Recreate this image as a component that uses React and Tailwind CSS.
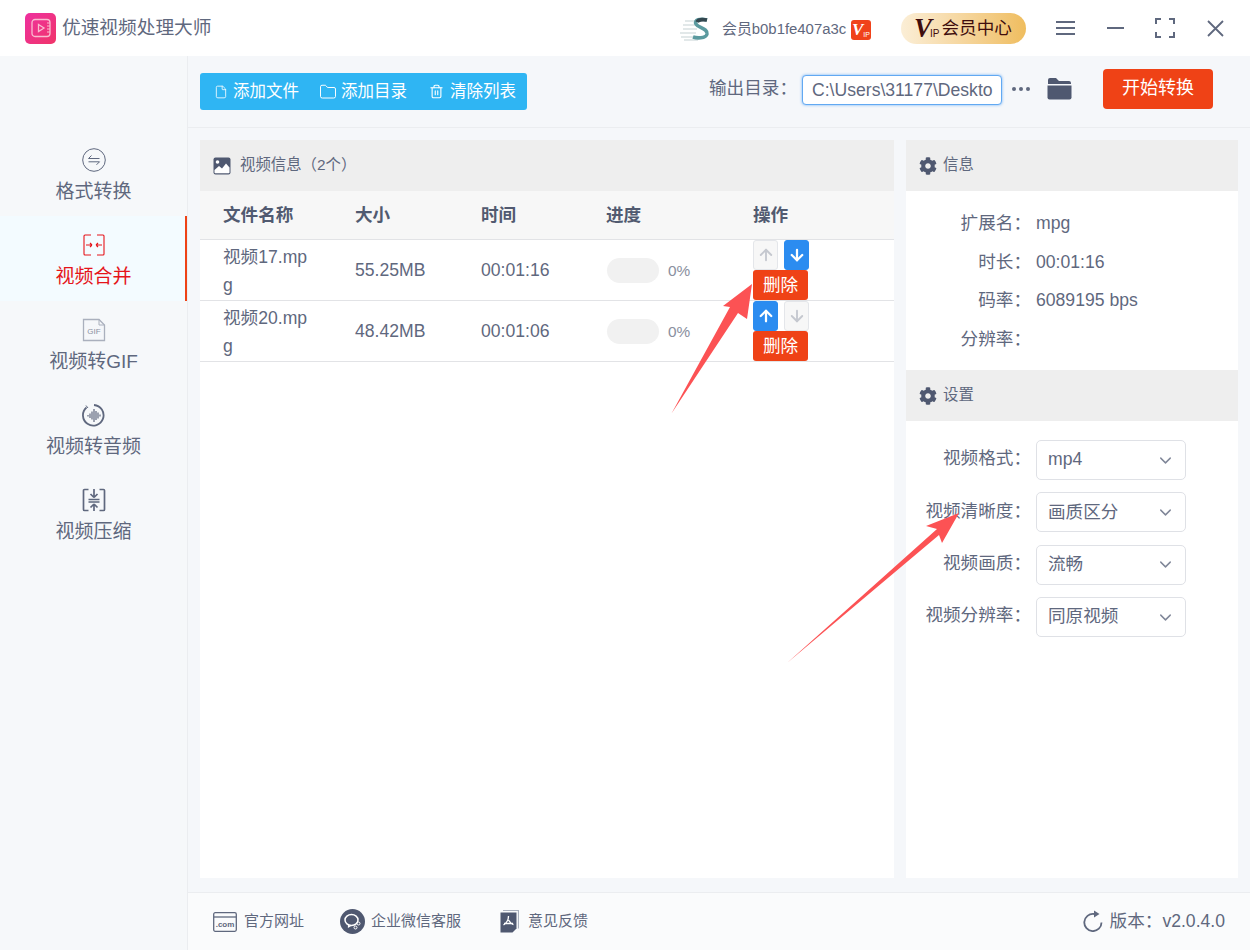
import React from 'react';
import { ArrowUp, ArrowDown, ChevronDown, File, Folder, Trash2 } from 'lucide-react';
import { FaCog } from 'react-icons/fa';

const C = '#5f687e';

function Logo() {
  return (
    <div className="w-[31px] h-[31px] rounded-[5px] bg-gradient-to-br from-[#ee2f9f] to-[#f03468] flex items-center justify-center">
      <svg width="20" height="20" viewBox="0 0 20 20" fill="none" stroke="#f9bcd0" strokeWidth="1.3">
        <rect x="1" y="1.5" width="18" height="17" rx="3" />
        <path d="M7.5 6.5 L13 10 L7.5 13.5 Z" />
        <path d="M16 5h3M16 8h3M16 11h3M16 14h3" strokeWidth="1" />
      </svg>
    </div>
  );
}

function SLogo() {
  return (
    <svg width="32" height="26" viewBox="0 0 32 26" fill="none">
      <path d="M5 5h12M3 9h12M3 13h14M0 17h16M1 21h18M4 24h14" stroke="#c6d2d3" strokeWidth="1.2" />
      <path d="M27 4 C20 2 14 4 16 8 C18 12 28 12 27 18 C26 23 16 22 13 21" stroke="#5b9a9f" strokeWidth="3.6" />
      <path d="M27 4 C22 3 18 4 17 6" stroke="#33474f" strokeWidth="3.6" />
    </svg>
  );
}

function SideIcon({ kind, color }) {
  if (kind === 'swap')
    return (
      <svg width="24" height="24" viewBox="0 0 24 24" fill="none" stroke={color} strokeWidth="1">
        <circle cx="12" cy="12" r="11.3" />
        <path d="M6.5 10.5h11M6.5 10.5l3-3M17.5 13.8h-11M17.5 13.8l-3 3" />
      </svg>
    );
  if (kind === 'merge')
    return (
      <svg width="24" height="24" viewBox="0 0 24 24" fill="none" stroke={color} strokeWidth="1.1">
        <path d="M9 2H3a1 1 0 0 0-1 1v18a1 1 0 0 0 1 1h6M15 2h6a1 1 0 0 1 1 1v18a1 1 0 0 1-1 1h-6" />
        <path d="M4 12h6M10 12l-2-2M10 12l-2 2M20 12h-6M14 12l2-2M14 12l2 2" />
      </svg>
    );
  if (kind === 'gif')
    return (
      <svg width="24" height="24" viewBox="0 0 24 24" fill="none">
        <path d="M1.5 1.5h15.500l5.500 5.500v15.500h-21z" stroke="#aab0bd" strokeWidth="1.300" fill="#f5f7fa" />
        <path d="M17 1.500v5.500h5.500" stroke="#aab0bd" strokeWidth="1" />
        <text x="12" y="16" textAnchor="middle" fontSize="8" fontFamily="Liberation Sans" fill="#8a91a1">GIF</text>
      </svg>
    );
  if (kind === 'audio')
    return (
      <svg width="24" height="24" viewBox="0 0 24 24" fill="none" stroke={color}>
        <path d="M4.500 4.500 A10.300 10.300 0 1 0 12 2" strokeWidth="1.800" />
        <path d="M4 2.500 L6 5" strokeWidth="1" />
        <path d="M6 12v1.500M8 10.500v4.500M10 8.500v8M12 6v13M14 8v9M16 9.500v6M18 11.500v2" strokeWidth="1.200" />
      </svg>
    );
  return (
    <svg width="24" height="24" viewBox="0 0 24 24" fill="none" stroke={color} strokeWidth="1.700">
      <path d="M6.500 1.500H2.500a1 1 0 0 0-1 1v19a1 1 0 0 0 1 1h4M17.500 1.500h4a1 1 0 0 1 1 1v19a1 1 0 0 1-1 1h-4" />
      <path d="M6.500 11.500h11M12 1v8.500M12 9.500l-3.500-3.500M12 9.500l3.500-3.500M6.500 14h11M12 23v-7M12 16l-3.500 3.500M12 16l3.500 3.500" />
    </svg>
  );
}

function SideItem({ kind, label, active }) {
  return (
    <div className={`h-[85px] flex flex-col items-center pt-[17px] pl-[2px] border-r-2 ${active ? 'bg-[#f3fbff] border-[#ee4216] text-[#e5141a]' : 'border-transparent text-[#5f687e]'}`}>
      <div className="h-6 flex items-center">
        <SideIcon kind={kind} color={active ? '#e5141a' : C} />
      </div>
      <div className="mt-[8px] text-[19px] leading-6">{label}</div>
    </div>
  );
}

function ToolBtn({ icon, label, cls }) {
  return (
    <div className={`flex items-center text-white text-[16.5px] ${cls}`}>
      {icon}
      <span>{label}</span>
    </div>
  );
}

function PanelHead({ icon, label }) {
  return (
    <div className="h-[51px] shrink-0 bg-[#eeeeee] flex items-center pl-[13px] text-[15.4px] text-[#5f687e]">
      {icon}
      <span className="ml-[6px] mb-[1px]">{label}</span>
    </div>
  );
}

function ImgIcon() {
  return (
    <svg className="mr-[3px]" width="18" height="18" viewBox="0 0 18 18">
      <rect x="0.500" y="0.500" width="17" height="17" rx="2" fill="#4f5870" />
      <circle cx="4.500" cy="5" r="1.800" fill="#fff" />
      <path d="M1.500 13 L6 9 L9 11.500 L13 6.500 L16.500 10.500 V15.500 a0.800 0.800 0 0 1 -0.800 0.800 H2.300 a0.800 0.800 0 0 1 -0.800 -0.800 Z" fill="#fff" />
    </svg>
  );
}

function MoveBtn({ dir, on }) {
  const I = dir === 'up' ? ArrowUp : ArrowDown;
  return (
    <div className={`w-[25px] h-[30px] rounded-[3px] flex items-center justify-center border ${on ? 'bg-[#2b8cf0] border-[#2b8cf0] text-white' : 'bg-[#f7f7f7] border-[#e4e6ea] text-[#c5c8cf]'}`}>
      <I size={18} strokeWidth={on ? 3 : 2.500} />
    </div>
  );
}

function Row({ name, size, time, first }) {
  return (
    <div className="h-[61px] border-b border-[#e2e3e6] grid grid-cols-[132px_126px_125px_147px_1fr] pl-[23px] items-center text-[17.6px] text-[#5f687e]">
      <div className="w-[90px] break-all leading-[28px] pt-[1px]">{name}</div>
      <div>{size}</div>
      <div>{time}</div>
      <div className="flex items-center mt-[1px]">
        <div className="w-[52px] h-[25px] rounded-full bg-[#f1f1f1] ml-[1px]" />
        <span className="ml-[9px] text-[15.4px] text-[#8a90a0]">0%</span>
      </div>
      <div className="w-[56px]">
        <div className="flex justify-between">
          <MoveBtn dir="up" on={!first} />
          <MoveBtn dir="down" on={first} />
        </div>
        <div className="w-[55px] h-[30px] rounded-[3px] bg-[#ef4216] text-white text-[17.6px] flex items-center justify-center">删除</div>
      </div>
    </div>
  );
}

function Select({ value }) {
  return (
    <div className="w-[150px] h-[40px] rounded-[5px] border border-[#dfe1e6] flex items-center justify-between pl-[11px] pr-[10px] text-[17.6px] text-[#5f687e] bg-white">
      <span className="mb-[1px]">{value}</span>
      <ChevronDown size={19} strokeWidth={1.800} color="#7f8698" />
    </div>
  );
}

function FootIcon({ kind }) {
  if (kind === 'com')
    return (
      <svg width="24" height="20" viewBox="0 0 24 20" fill="none">
        <rect x="0.700" y="0.700" width="22.600" height="18.600" rx="1.500" stroke="#5f687e" strokeWidth="1.300" />
        <path d="M1 5h22" stroke="#5f687e" strokeWidth="1.300" />
        <text x="12" y="15" textAnchor="middle" fontSize="8" fontWeight="700" fontFamily="Liberation Sans" fill="#5f687e">.com</text>
      </svg>
    );
  if (kind === 'chat')
    return (
      <svg width="25" height="25" viewBox="0 0 25 25" fill="none">
        <circle cx="12.500" cy="12.500" r="12.500" fill="#4f5870" />
        <ellipse cx="11.500" cy="11" rx="6.500" ry="5.500" stroke="#fff" strokeWidth="1.500" />
        <path d="M8.500 15.500 L8.500 18 L11 16.500" stroke="#fff" strokeWidth="1.200" />
        <circle cx="18.500" cy="14.500" r="1.500" stroke="#fff" strokeWidth="1" />
        <circle cx="15.500" cy="18.500" r="1.500" stroke="#fff" strokeWidth="1" />
      </svg>
    );
  return (
    <svg width="19" height="23" viewBox="0 0 19 23" fill="none">
      <path d="M3 0.500h15.500v18" stroke="#aab0bd" strokeWidth="1.200" />
      <path d="M0.500 2.500h16v16l-4 4h-12z" fill="#4f5870" />
      <path d="M8.500 6c0 4-2 7-5 9M8.500 10c1.500 2.500 3 4 5 4.500M4 13.500h9" stroke="#fff" strokeWidth="1.300" />
    </svg>
  );
}

function FootLink({ kind, label, cls }) {
  return (
    <div className={`flex items-center text-[15px] text-[#5f687e] ${cls}`}>
      <FootIcon kind={kind} />
      <span>{label}</span>
    </div>
  );
}

export default function App() {
  return (
    <div className="relative w-[1250px] h-[950px] overflow-hidden flex flex-col bg-white text-[#5f687e]" style={{ fontFamily: '"Liberation Sans","Noto Sans CJK SC",sans-serif' }}>
      <header className="h-[56px] shrink-0 bg-white flex items-center pl-[25px]">
        <Logo />
        <div className="ml-[6px] text-[18.7px] text-[#5f687e] w-[150px] whitespace-nowrap">优速视频处理大师</div>
        <div className="ml-[468px] w-[32px] mt-[2px]"><SLogo /></div>
        <div className="ml-[10px] text-[14.9px] whitespace-nowrap w-[125px] mt-[2px]">会员b0b1fe407a3c</div>
        <div className="ml-[4px] mt-[4px] w-[20px] h-[20px] rounded-[3px] bg-[#f0421a] text-white flex items-end justify-center leading-none pb-[2px]" style={{ fontFamily: '"Liberation Serif",serif' }}>
          <span className="text-[17px] italic font-bold">V</span><span className="text-[7px]" style={{ fontFamily: '"Liberation Sans",sans-serif' }}>IP</span>
        </div>
        <div className="ml-[30px] w-[125px] h-[31px] rounded-full bg-gradient-to-r from-[#fbeed6] to-[#efbd5e] flex items-center pl-[13px] text-[#3f0d0d]">
          <span className="text-[27px] leading-none italic font-bold" style={{ fontFamily: '"Liberation Serif",serif' }}>V</span>
          <span className="text-[10px] self-end mb-[3px] mr-[2px] -ml-[2px]">IP</span>
          <span className="text-[17.6px] whitespace-nowrap">会员中心</span>
        </div>
        <div className="ml-[30px] flex flex-col gap-[4px] w-[19px]">
          <div className="h-[2px] bg-[#5f687e]" /><div className="h-[2px] bg-[#5f687e]" /><div className="h-[2px] bg-[#5f687e]" />
        </div>
        <div className="ml-[32px] w-[17px] h-[2px] bg-[#5f687e]" />
        <svg className="ml-[31px]" width="20" height="20" viewBox="0 0 20 20" fill="none" stroke="#5f687e" strokeWidth="2">
          <path d="M1 6V1h5M14 1h5v5M19 14v5h-5M6 19H1v-5" />
        </svg>
        <svg className="ml-[32px]" width="17" height="17" viewBox="0 0 17 17" fill="none" stroke="#5f687e" strokeWidth="1.800">
          <path d="M1 1l15 15M16 1L1 16" />
        </svg>
      </header>

      <div className="flex flex-1 min-h-0">
        <aside className="w-[188px] shrink-0 bg-[#f6f8fa] border-r border-[#ebedf0] pt-[75px]">
          <SideItem kind="swap" label="格式转换" />
          <SideItem kind="merge" label="视频合并" active />
          <SideItem kind="gif" label="视频转GIF" />
          <SideItem kind="audio" label="视频转音频" />
          <SideItem kind="press" label="视频压缩" />
        </aside>

        <div className="flex-1 min-w-0 flex flex-col bg-[#f5f7fa]">
          <div className="h-[72px] shrink-0 border-b border-[#ebedf0] flex items-center pl-[12px] pb-[1px]">
            <div className="w-[327px] h-[37px] rounded-[3px] bg-[#2fb5f3] flex items-center pl-[14px] mt-[1px]">
              <ToolBtn cls="w-[105px]" label="添加文件" icon={<File size={14} strokeWidth={1.400} className="mr-[5px]" />} />
              <ToolBtn cls="w-[110px]" label="添加目录" icon={<Folder size={18} strokeWidth={1.300} className="mr-[4px]" />} />
              <ToolBtn cls="" label="清除列表" icon={<Trash2 size={15} strokeWidth={1.800} className="mr-[6px]" />} />
            </div>
            <div className="ml-[182px] text-[17.6px] whitespace-nowrap w-[93px] mb-[5px]">输出目录：</div>
            <div className="w-[200px] h-[30px] rounded-[4px] border border-[#62a9f2] shadow-[0_0_3px_#6fb0f5] bg-white flex items-center pl-[9px] overflow-hidden text-[17.6px] text-[#5f687e] whitespace-nowrap mb-[2px]">
              <span className="w-[181px] overflow-hidden">C:\Users\31177\Desktop</span>
            </div>
            <div className="ml-[10px] flex gap-[3px] w-[19px] mb-[4px]">
              <div className="w-[4px] h-[4px] rounded-full bg-[#5f687e]" /><div className="w-[4px] h-[4px] rounded-full bg-[#5f687e]" /><div className="w-[4px] h-[4px] rounded-full bg-[#5f687e]" />
            </div>
            <svg className="ml-[16px] mb-[5px]" width="25" height="23" viewBox="0 0 25 23">
              <path d="M1 3a2 2 0 0 1 2-2h6l3 3h10a2 2 0 0 1 2 2v1H1z" fill="#4f5870" />
              <path d="M0.500 8.500h24v12a2 2 0 0 1-2 2h-20a2 2 0 0 1-2-2z" fill="#4f5870" />
            </svg>
            <div className="ml-[31px] w-[110px] h-[40px] rounded-[4px] bg-[#ef4216] text-white text-[18px] flex items-center justify-center mb-[5px]">开始转换</div>
          </div>

          <div className="flex-1 min-h-0 flex gap-[12px] pt-[12px] pb-[14px] pl-[12px] pr-[12px]">
            <section className="w-[694px] bg-white flex flex-col">
              <PanelHead icon={<ImgIcon />} label="视频信息（2个）" />
              <div className="h-[49px] shrink-0 bg-[#f7f7f7] border-b border-[#e2e3e6] grid grid-cols-[132px_126px_125px_147px_1fr] pl-[23px] items-center text-[17.6px] font-bold text-[#515a70]">
                <div>文件名称</div><div>大小</div><div>时间</div><div>进度</div><div>操作</div>
              </div>
              <Row name="视频17.mpg" size="55.25MB" time="00:01:16" first />
              <Row name="视频20.mpg" size="48.42MB" time="00:01:06" />
            </section>

            <section className="flex-1 bg-white flex flex-col">
              <PanelHead icon={<FaCog size={18} color="#4f5870" />} label="信息" />
              <div className="h-[179px] shrink-0 pt-[13px] text-[17.6px]">
                {[['扩展名：', 'mpg'], ['时长：', '00:01:16'], ['码率：', '6089195 bps'], ['分辨率：', '']].map(([k, v]) => (
                  <div key={k} className="h-[38.500px] flex items-center">
                    <div className="w-[125px] text-right shrink-0">{k}</div>
                    <div className="ml-[5px]">{v}</div>
                  </div>
                ))}
              </div>
              <PanelHead icon={<FaCog size={18} color="#4f5870" />} label="设置" />
              <div className="pt-[19px] text-[17.6px] flex flex-col gap-[12.400px]">
                {[['视频格式：', 'mp4'], ['视频清晰度：', '画质区分'], ['视频画质：', '流畅'], ['视频分辨率：', '同原视频']].map(([k, v]) => (
                  <div key={k} className="flex items-center">
                    <div className="w-[125px] text-right shrink-0 whitespace-nowrap mb-[3px]">{k}</div>
                    <div className="ml-[5px]"><Select value={v} /></div>
                  </div>
                ))}
              </div>
            </section>
          </div>

          <footer className="h-[58px] shrink-0 bg-[#fafbfc] border-t border-[#ebedf0] flex items-center pl-[25px] pr-[25px]">
            <FootLink kind="com" label="官方网址" cls="gap-[7px]" />
            <FootLink kind="chat" label="企业微信客服" cls="gap-[6px] ml-[36px]" />
            <FootLink kind="pdf" label="意见反馈" cls="gap-[9px] ml-[39px]" />
            <div className="ml-auto flex items-center text-[17.6px]">
              <svg className="mr-[7px]" width="20" height="22" viewBox="0 0 20 22" fill="none">
                <path d="M11 4 A8.600 8.600 0 1 0 18.500 12.500" stroke="#5f687e" strokeWidth="1.800" />
                <path d="M11 0.500 L16.500 4 L11 7.500 Z" fill="#5f687e" />
              </svg>
              <span>版本：v2.0.4.0</span>
            </div>
          </footer>
        </div>
      </div>

      <svg className="absolute left-0 top-0 pointer-events-none" width="1250" height="950" viewBox="0 0 1250 950">
        <polygon points="752,284 747,319 738,313 671.500,413.500 730,307 723,306" fill="#fc5254" />
        <polygon points="959,513 942,543 939,535 787,663 937,529 926,526" fill="#fc5254" />
      </svg>
    </div>
  );
}
